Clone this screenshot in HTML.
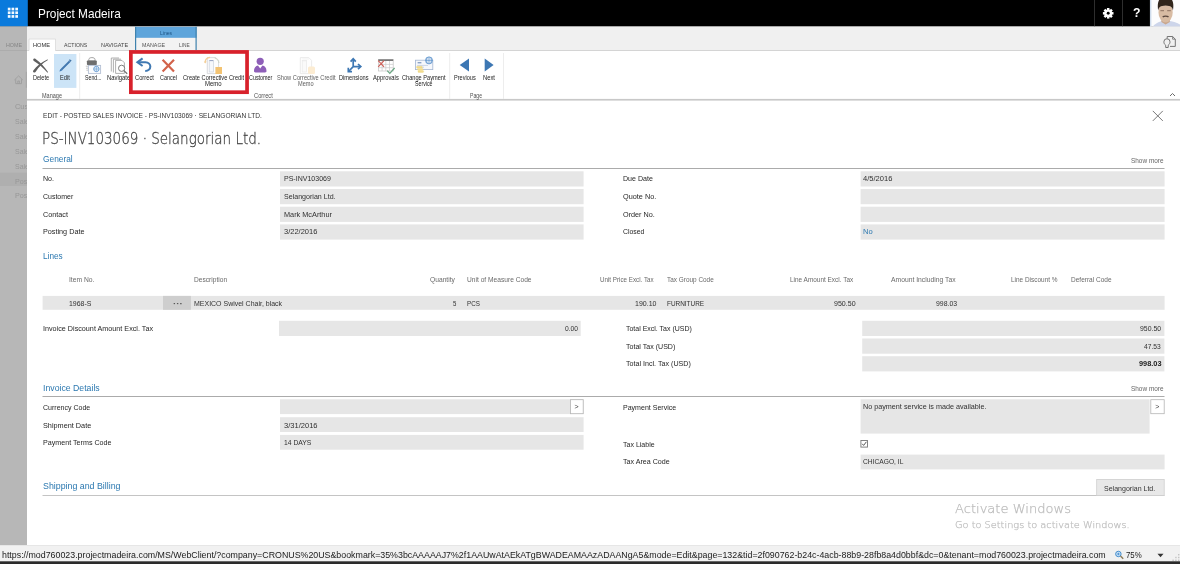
<!DOCTYPE html>
<html lang="en"><head><meta charset="utf-8"><title>Project Madeira - Posted Sales Invoice</title>
<style>
html,body{margin:0;padding:0;background:#fff;}
body{width:1180px;height:564px;overflow:hidden;font-family:"Liberation Sans",sans-serif;}
#app{will-change:transform;position:relative;width:1180px;height:564px;overflow:hidden;background:#fff;}
#app div,#app svg{position:absolute;}
.t{position:absolute;white-space:nowrap;transform-origin:0 50%;display:block;}
.f{background:#e6e6e6;}
.bm{display:inline-block;width:0;height:0;vertical-align:baseline;}

</style></head>
<body>
<div id="app">
<svg style="left:0;top:0" width="1180" height="564" viewBox="0 0 1180 564">
<!-- top bar -->
<rect x="0" y="0" width="1180" height="26.6" fill="#000"/>
<rect x="0" y="0" width="27.8" height="26.5" fill="#0a7adc"/>
<g fill="#f4faff"><rect x="7.80" y="7.70" width="2.7" height="2.7"/><rect x="11.55" y="7.70" width="2.7" height="2.7"/><rect x="15.30" y="7.70" width="2.7" height="2.7"/><rect x="7.80" y="11.40" width="2.7" height="2.7"/><rect x="11.55" y="11.40" width="2.7" height="2.7"/><rect x="15.30" y="11.40" width="2.7" height="2.7"/><rect x="7.80" y="15.10" width="2.7" height="2.7"/><rect x="11.55" y="15.10" width="2.7" height="2.7"/><rect x="15.30" y="15.10" width="2.7" height="2.7"/></g>
<rect x="1094" y="0" width="1" height="26.8" fill="#2e2e2e"/>
<rect x="1122" y="0" width="1" height="26.8" fill="#2e2e2e"/>
<!-- gear -->
<g transform="translate(1108.2,13.3)"><g fill="#fff"><circle r="3.9"/><rect x="-1.25" y="-5.3" width="2.5" height="10.6"/><rect x="-1.25" y="-5.3" width="2.5" height="10.6" transform="rotate(45)"/><rect x="-1.25" y="-5.3" width="2.5" height="10.6" transform="rotate(90)"/><rect x="-1.25" y="-5.3" width="2.5" height="10.6" transform="rotate(135)"/></g><circle r="1.45" fill="#000"/></g>
<!-- avatar -->
<defs><filter id="bl" x="-10%" y="-10%" width="120%" height="120%"><feGaussianBlur stdDeviation="0.55"/></filter><clipPath id="avc"><rect x="0" y="0" width="30.2" height="26.8"/></clipPath></defs>
<g transform="translate(1149.8,0)" clip-path="url(#avc)"><rect width="30.2" height="26.8" fill="#fcfcfd"/><rect width="1.6" height="26.8" fill="#cfdcec"/>
<g filter="url(#bl)">
<path d="M2 28 C5 23 10.5 21.4 13 20.8 L18.5 20.8 C22 21.4 27 22.4 31 25 V28 Z" fill="#cdd5ea"/>
<path d="M11.6 17 H20 V22 L15.8 24.6 L11.6 22 Z" fill="#c9a68c"/>
<ellipse cx="15.8" cy="12.4" rx="7.1" ry="10.2" fill="#d8bba3"/>
<path d="M8.5 10.6 C7.2 5 8.6 -1.2 11.2 -1.2 H20.4 C23 -1.2 24.4 5 23.1 10.6 C22.8 7.4 21.4 5.7 15.8 5.5 C10.2 5.7 8.8 7.4 8.5 10.6 Z" fill="#30261f"/>
<path d="M10.6 10.6 H14.2 M17.4 10.6 H21" stroke="#9c7f6d" stroke-width="1.4"/>
<path d="M12.9 16.9 C14.3 15.9 17.3 15.9 18.7 16.9" fill="none" stroke="#5a463d" stroke-width="1.4"/>
</g></g>

<!-- left sidebar (dimmed) -->
<rect x="0" y="26.4" width="27" height="519" fill="#b7b7b7"/>
<rect x="0" y="172.6" width="27" height="13.4" fill="#afafaf"/>
<rect x="0" y="50" width="27" height="1" fill="#acacac"/>
<g fill="none"><path d="M14.4 80 L18.6 75.9 L22.8 80 M15.7 79.2 V83.6 H21.5 V79.2 M17.8 83.6 V81 H19.4 V83.6" stroke="#9c9c9c" stroke-width="0.85"/><path d="M26.3 71.8 V87.8" stroke="#a4a4a4" stroke-width="0.9"/></g>

<!-- tab strip -->
<rect x="27" y="26.5" width="1153" height="24" fill="#f0f0f0"/>
<rect x="27.2" y="50" width="1153" height="1" fill="#d4d4d4"/>
<path d="M29 51 V39 H55.5 V51" fill="#fff" stroke="#dcdcdc" stroke-width="0.9"/>
<rect x="29.5" y="50" width="25.5" height="1.2" fill="#fff"/>
<!-- Lines contextual group -->
<rect x="135" y="26.8" width="61.6" height="11.1" fill="#5ea5db"/>
<rect x="135" y="37.9" width="61.6" height="12.3" fill="#f3f3f3"/>
<rect x="135" y="26.8" width="1.2" height="23.4" fill="#3f82ad"/>
<rect x="195.5" y="26.8" width="1.2" height="23.4" fill="#3f82ad"/>
<!-- lightbulb/page icon -->
<g fill="none" stroke="#6e6e6e" stroke-width="0.95"><path d="M1167.2 38.6 V36.5 H1172.6 L1175.3 39.2 V46.4 H1170"/><path d="M1172.6 36.5 V39.2 H1175.3" stroke-width="0.8"/><path d="M1165.7 47.5 V45.3 C1164.3 44.2 1163.9 43 1163.9 41.8 A3.05 3.05 0 0 1 1170 41.8 C1170 43 1169.6 44.2 1168.2 45.3 V47.5 Z" fill="#f0f0f0"/></g>

<!-- ribbon -->
<rect x="27.2" y="51" width="1153" height="48" fill="#fff"/>
<rect x="27" y="98.9" width="1153" height="1.7" fill="#c8c8c8"/>
<rect x="54" y="54" width="22.4" height="33.9" fill="#cce4f7"/>
<rect x="79.2" y="53" width="1" height="46" fill="#ededed"/>
<rect x="449.2" y="53" width="1" height="46" fill="#ededed"/>
<rect x="503" y="53" width="1" height="46" fill="#ededed"/>
<path d="M1170 96 L1172.5 93.5 L1175 96" fill="none" stroke="#6a6a6a" stroke-width="1"/>

<!-- page close X -->
<path d="M1152.8 110.9 L1162.8 120.9 M1162.8 110.9 L1152.8 120.9" stroke="#707070" stroke-width="0.95" fill="none"/>

<!-- section rules -->
<rect x="42.5" y="168" width="1122" height="1" fill="#ababab"/>
<rect x="42.5" y="396" width="1122" height="1" fill="#ababab"/>
<rect x="42.5" y="495" width="1122" height="1" fill="#c4c4c4"/>

<g fill="#e6e6e6">
<!-- General fields -->
<rect x="280" y="171.3" width="303.6" height="15.2"/>
<rect x="280" y="189" width="303.6" height="15.2"/>
<rect x="280" y="206.7" width="303.6" height="15.2"/>
<rect x="280" y="224.4" width="303.6" height="15.2"/>
<rect x="860.6" y="171.3" width="304" height="15.2"/>
<rect x="860.6" y="189" width="304" height="15.2"/>
<rect x="860.6" y="206.7" width="304" height="15.2"/>
<rect x="860.6" y="224.4" width="304" height="15.2"/>
<!-- Lines row -->
<rect x="42.6" y="295.9" width="1122" height="13.9"/>
<rect x="279" y="320.8" width="301.7" height="15.2"/>
<rect x="862.2" y="320.8" width="302.2" height="15.2"/>
<rect x="862.2" y="338.5" width="302.2" height="15.2"/>
<rect x="862.2" y="356.2" width="302.2" height="15.2"/>
<!-- Invoice details -->
<rect x="280" y="399.3" width="303.6" height="14.8"/>
<rect x="280" y="417.2" width="303.6" height="14.8"/>
<rect x="280" y="434.9" width="303.6" height="14.8"/>
<rect x="860.6" y="399.3" width="289" height="34.3"/>
<rect x="860.6" y="454.6" width="304" height="14.8"/>
</g>
<rect x="163" y="295.9" width="27.9" height="13.9" fill="#cecece"/>
<rect x="570.4" y="399.7" width="12.8" height="14" fill="#fff" stroke="#b5b5b5" stroke-width="0.8"/>
<rect x="1150.8" y="399.7" width="13.4" height="14" fill="#fff" stroke="#b5b5b5" stroke-width="0.8"/>
<g transform="translate(860.4,440)"><rect x="0.5" y="0.5" width="6.6" height="6.6" fill="#fff" stroke="#777" stroke-width="0.9"/><path d="M1.8 3.8 L3.2 5.4 L6 1.8" fill="none" stroke="#444" stroke-width="0.9"/></g>
<rect x="1096.7" y="479.4" width="67.5" height="16" fill="#e8e8e8" stroke="#cfcfcf" stroke-width="0.8"/>

<!-- status bar -->
<rect x="0" y="545" width="1180" height="19" fill="#f1f1f1"/>
<rect x="0" y="545" width="1180" height="1" fill="#e6e6e6"/>
<rect x="0" y="561.3" width="1180" height="2.7" fill="#2b2b2b"/>
<g transform="translate(1114.6,550.2) scale(0.88)"><circle cx="4.3" cy="4.3" r="3.1" fill="#cfe6fb" stroke="#2f7fc4" stroke-width="1"/><path d="M6.7 6.7 L9.8 9.8" stroke="#8a7b5a" stroke-width="1.6"/><path d="M2.8 4.3 H5.8 M4.3 2.8 V5.8" stroke="#2f7fc4" stroke-width="0.8"/></g>
<path d="M1157.5 553.8 H1163.5 L1160.5 557.2 Z" fill="#333"/>
<g fill="#c4c4c4" transform="translate(1171,552.6)"><rect x="7" y="7" width="1.4" height="1.4"/><rect x="7" y="4.2" width="1.4" height="1.4"/><rect x="4.2" y="7" width="1.4" height="1.4"/><rect x="7" y="1.4" width="1.4" height="1.4"/><rect x="4.2" y="4.2" width="1.4" height="1.4"/><rect x="1.4" y="7" width="1.4" height="1.4"/></g>
</svg>
<svg style="left:27px;top:51px" width="500" height="48" viewBox="27 51 500 48">
<!-- Delete X (brush style) -->
<g fill="#5e5e5e">
<path d="M33.2 59.6 C33.4 58.4 34.6 58.2 35.6 58.9 C40.4 62.2 44.4 66.6 48 72 C48.2 72.5 47.7 72.8 47.3 72.4 C43.4 68 39 64.2 33.9 61 C33.3 60.6 33.1 60.1 33.2 59.6 Z"/>
<path d="M47.9 59.9 C48.1 59.5 47.7 59.3 47.3 59.5 C41.6 62 36.6 66 33.3 70.4 C32.7 71.3 33.1 72.3 34.1 72.4 C34.9 72.5 35.5 72.2 35.9 71.5 C38.6 67 42.6 63 47.6 60.3 Z"/>
</g>
<!-- Edit pencil -->
<g>
<path d="M60.7 69.2 L69 60.9 L70.1 62 L61.8 70.3 Z" fill="#4479b0" stroke="#4479b0" stroke-width="0.7" stroke-linejoin="round"/>
<path d="M59.4 71.6 L60.3 69 L62 70.7 Z" fill="#3f7cb8"/>
<path d="M69.4 60.2 L70 59.6 L71.2 60.8 L70.7 61.4 Z" fill="#35689c" stroke="#35689c" stroke-width="0.6"/>
</g>
<!-- Send: printer + envelope + globe -->
<g>
<path d="M88.8 61 V59.4 C88.8 57 95 57 95 59.4 V61 Z" fill="#fff" stroke="#8d8d8d" stroke-width="0.8"/>
<rect x="86.9" y="60.4" width="9.9" height="4.6" rx="0.8" fill="#6e6e6e"/>
<path d="M85.8 66.2 H88 M86 68.2 H88 M86.4 70.2 H88" stroke="#b5b5b5" stroke-width="0.8"/>
<rect x="88.4" y="65.4" width="12.2" height="8" fill="#fbfcfe" stroke="#b4c0d4" stroke-width="0.9"/>
<circle cx="96.4" cy="69" r="2.7" fill="#e3eefa" stroke="#6a9dd2" stroke-width="0.9"/>
<path d="M96.4 66.3 V71.7 M93.7 69 H99.1" stroke="#6a9dd2" stroke-width="0.6"/>
</g>
<!-- Navigate: pages + magnifier -->
<g fill="#fff" stroke="#9c9c9c" stroke-width="0.8">
<path d="M111.3 71.5 V58 H119"/>
<path d="M113.4 72.5 V59.2 H121"/>
<path d="M115.6 73.4 V60.4 H122 L124.4 62.8 V73.4 Z"/>
<circle cx="121.6" cy="68.3" r="3.1" stroke="#6f6f6f" stroke-width="0.9"/>
<path d="M123.9 70.6 L127.2 73.8" stroke="#6f6f6f" stroke-width="1.2" fill="none"/>
</g>
<!-- Correct (undo arrow) -->
<g fill="none" stroke="#4079b2" stroke-width="2.05" stroke-linejoin="miter">
<path d="M142.6 58.4 L137.4 62.3 L142.6 66"/>
<path d="M138 62.3 H145.4 C152 62.3 152 70.8 145.2 71"/>
</g>
<!-- Cancel X -->
<g fill="none" stroke="#d2634b" stroke-width="2.2">
<path d="M162.6 59.8 L174 71.4 M174 59.8 L162.6 71.4"/>
</g>
<!-- Create Corrective Credit Memo -->
<g>
<path d="M207.3 57.6 H215.8 L218.6 60.4 V73.6 H207.3 Z" fill="#fdfdfd" stroke="#cfd2d6" stroke-width="0.8"/>
<rect x="209.2" y="60.4" width="4.4" height="11.6" fill="#f6f8fb" stroke="#cdd3de" stroke-width="0.7"/>
<path d="M209.6 60.6 H213.2" stroke="#8f9dbd" stroke-width="0.9"/>
<path d="M205.2 62.4 C205.2 59.2 207.5 57.6 210 57.4" fill="none" stroke="#f3cf98" stroke-width="1.3"/>
<path d="M203.8 61.4 L205.2 63.6 L206.8 61.4 Z" fill="#f3cf98"/>
<path d="M214.6 57.9 C217 58.8 218.8 60.6 219 63" fill="none" stroke="#c9d3c0" stroke-width="0.9"/>
<rect x="215.4" y="67" width="6.6" height="7" fill="#f3c372"/>
</g>
<!-- Customer -->
<g fill="#8e5fb8">
<circle cx="260.2" cy="61.3" r="3.6"/>
<path d="M254 71 C254 68 255.6 66 258 65.6 L260.2 68.6 L262.4 65.6 C264.8 66 266.5 68 266.5 71 C266.5 72 266 72.4 265 72.4 H255.5 C254.5 72.4 254 72 254 71 Z"/>
</g>
<!-- Show Corrective Credit Memo (disabled) -->
<g>
<path d="M300.3 57.6 H308.8 L311.6 60.4 V73.6 H300.3 Z" fill="#fefefe" stroke="#e6e6e6" stroke-width="0.8"/>
<rect x="302.2" y="60.4" width="4.4" height="11.6" fill="#fafafa" stroke="#e9e9e9" stroke-width="0.7"/>
<path d="M302.4 59 H309 M302.4 61 H307" stroke="#ececec" stroke-width="0.6"/>
<rect x="308" y="66.6" width="7" height="7.4" rx="1.5" fill="#fcecd2"/>
</g>
<!-- Dimensions -->
<g fill="none" stroke="#3d77b3" stroke-width="1.7">
<path d="M353.2 66.6 V59.6 M353.2 66.6 H360 M353.2 66.6 L349 71"/>
<path d="M350.6 61.6 L353.2 58.8 L355.8 61.6" />
<path d="M358 64 L360.8 66.6 L358 69.2"/>
<path d="M348.3 67.8 V71.6 H352"/>
</g>
<!-- Approvals -->
<g>
<rect x="378.4" y="59.6" width="14.8" height="11.4" fill="#fff" stroke="#c4c4c4" stroke-width="0.7"/>
<rect x="378.4" y="59.4" width="14.8" height="1.5" fill="#6a6a6a"/>
<path d="M378.4 64.4 H393.2 M378.4 67.7 H393.2 M382.1 61 V71 M385.8 61 V71 M389.5 61 V71" stroke="#c9c9c9" stroke-width="0.7" fill="none"/>
<path d="M378.2 60.6 L384 66.8 M384 60.6 L378.2 66.8" stroke="#cf6058" stroke-width="1.2" fill="none"/>
<path d="M387.2 70.6 L389.8 73.4 L394.6 68" stroke="#6aa582" stroke-width="1.3" fill="none"/>
</g>
<!-- Change Payment Service -->
<g>
<rect x="415.4" y="60.2" width="17.4" height="9.4" fill="#f6f8fc" stroke="#a3b6d3" stroke-width="0.8"/>
<path d="M417.6 62.8 H421.4" stroke="#5f7fb0" stroke-width="1"/>
<path d="M417.2 65.4 H428 M417.2 67.2 H424" stroke="#b9c6db" stroke-width="0.7"/>
<circle cx="429" cy="60.4" r="3.5" fill="#e9f1fb" stroke="#5b92cc" stroke-width="0.8"/>
<path d="M429 56.9 V63.9 M425.5 60.4 H432.5 M427.3 57.4 C426.4 59.4 426.4 61.4 427.3 63.4 M430.7 57.4 C431.6 59.4 431.6 61.4 430.7 63.4" stroke="#4a86c5" stroke-width="0.6" fill="none"/>
<rect x="416.6" y="66.2" width="5.6" height="1.8" rx="0.6" fill="#f5df8f" stroke="#e6cb6e" stroke-width="0.3"/>
<rect x="417.4" y="68.4" width="5.6" height="1.8" rx="0.6" fill="#f5df8f" stroke="#e6cb6e" stroke-width="0.3"/>
<rect x="418" y="70.6" width="5.6" height="1.8" rx="0.6" fill="#f5df8f" stroke="#e6cb6e" stroke-width="0.3"/>
</g>
<!-- Previous / Next -->
<path d="M459.7 65 L469 58.5 V71.4 Z" fill="#3d77b3"/>
<path d="M493.6 65 L484.7 58.5 V71.4 Z" fill="#3d77b3"/>
</svg>


<span class="t" style="left:37.96px;top:6.0px;font-size:12.6px;line-height:17.64px;color:#fff;transform:scaleX(0.9382);">Project Madeira</span>
<span class="t" style="left:1132.6px;top:5.47px;font-size:12.6px;line-height:17.64px;color:#fff;font-weight:700;transform:scaleX(0.9714);">?</span>
<span class="t" style="left:5.8px;top:41.02px;font-size:5.8px;line-height:8.12px;color:#868686;transform:scaleX(0.9244);">HOME</span>
<span class="t" style="left:32.9px;top:41.02px;font-size:5.8px;line-height:8.12px;color:#2e2e2e;transform:scaleX(0.9758);">HOME</span>
<span class="t" style="left:63.7px;top:41.01px;font-size:5.8px;line-height:8.12px;color:#444;transform:scaleX(0.8996);">ACTIONS</span>
<span class="t" style="left:100.7px;top:41.01px;font-size:5.8px;line-height:8.12px;color:#444;transform:scaleX(0.9550);">NAVIGATE</span>
<span class="t" style="left:159.8px;top:29.01px;font-size:6px;line-height:8.4px;color:#1d5484;transform:scaleX(0.8436);">Lines</span>
<span class="t" style="left:141.7px;top:41.01px;font-size:5.8px;line-height:8.12px;color:#555;transform:scaleX(0.9186);">MANAGE</span>
<span class="t" style="left:179.1px;top:41.01px;font-size:5.8px;line-height:8.12px;color:#555;transform:scaleX(0.8294);">LINE</span>
<span class="t" style="left:32.5px;top:74.01px;font-size:6.4px;line-height:8.96px;color:#1c1c1c;transform:scaleX(0.8721);">Delete</span>
<span class="t" style="left:59.9px;top:74.01px;font-size:6.4px;line-height:8.96px;color:#1c1c1c;transform:scaleX(0.8811);">Edit</span>
<span class="t" style="left:85.0px;top:74.01px;font-size:6.4px;line-height:8.96px;color:#1c1c1c;transform:scaleX(0.8156);">Send...</span>
<span class="t" style="left:107.4px;top:74.01px;font-size:6.4px;line-height:8.96px;color:#1c1c1c;transform:scaleX(0.9194);">Navigate</span>
<span class="t" style="left:134.9px;top:74.01px;font-size:6.4px;line-height:8.96px;color:#1c1c1c;transform:scaleX(0.9020);">Correct</span>
<span class="t" style="left:160.0px;top:74.01px;font-size:6.4px;line-height:8.96px;color:#1c1c1c;transform:scaleX(0.8576);">Cancel</span>
<span class="t" style="left:182.8px;top:74.01px;font-size:6.4px;line-height:8.96px;color:#1c1c1c;transform:scaleX(0.8854);">Create Corrective Credit</span>
<span class="t" style="left:204.8px;top:80.0px;font-size:6.4px;line-height:8.96px;color:#1c1c1c;transform:scaleX(0.9340);">Memo</span>
<span class="t" style="left:248.5px;top:74.01px;font-size:6.4px;line-height:8.96px;color:#1c1c1c;transform:scaleX(0.8435);">Customer</span>
<span class="t" style="left:276.8px;top:74.01px;font-size:6.4px;line-height:8.96px;color:#5e5e5e;transform:scaleX(0.8904);">Show Corrective Credit</span>
<span class="t" style="left:298.0px;top:80.0px;font-size:6.4px;line-height:8.96px;color:#5e5e5e;transform:scaleX(0.8791);">Memo</span>
<span class="t" style="left:339.4px;top:74.01px;font-size:6.4px;line-height:8.96px;color:#1c1c1c;transform:scaleX(0.8828);">Dimensions</span>
<span class="t" style="left:373.0px;top:74.01px;font-size:6.4px;line-height:8.96px;color:#1c1c1c;transform:scaleX(0.9071);">Approvals</span>
<span class="t" style="left:402.3px;top:74.01px;font-size:6.4px;line-height:8.96px;color:#1c1c1c;transform:scaleX(0.8810);">Change Payment</span>
<span class="t" style="left:415.3px;top:80.0px;font-size:6.4px;line-height:8.96px;color:#1c1c1c;transform:scaleX(0.8228);">Service</span>
<span class="t" style="left:453.8px;top:74.01px;font-size:6.4px;line-height:8.96px;color:#1c1c1c;transform:scaleX(0.8716);">Previous</span>
<span class="t" style="left:483.0px;top:74.01px;font-size:6.4px;line-height:8.96px;color:#1c1c1c;transform:scaleX(0.9129);">Next</span>
<span class="t" style="left:41.9px;top:92.01px;font-size:6.3px;line-height:8.82px;color:#505050;transform:scaleX(0.8773);">Manage</span>
<span class="t" style="left:254.0px;top:92.01px;font-size:6.3px;line-height:8.82px;color:#505050;transform:scaleX(0.9094);">Correct</span>
<span class="t" style="left:469.6px;top:92.01px;font-size:6.3px;line-height:8.82px;color:#505050;transform:scaleX(0.8156);">Page</span>
<div style="left:0;top:101.12px;width:27px;height:11.2px;overflow:hidden"><span class="t" style="left:14.6px;top:0px;font-size:8px;line-height:11.2px;color:#979797;transform:scaleX(0.9288);">Cust</span></div>
<div style="left:0;top:115.93px;width:27px;height:11.2px;overflow:hidden"><span class="t" style="left:14.6px;top:0px;font-size:8px;line-height:11.2px;color:#979797;transform:scaleX(0.8755);">Sale</span></div>
<div style="left:0;top:130.82px;width:27px;height:11.2px;overflow:hidden"><span class="t" style="left:14.6px;top:0px;font-size:8px;line-height:11.2px;color:#979797;transform:scaleX(0.8755);">Sale</span></div>
<div style="left:0;top:146.02px;width:27px;height:11.2px;overflow:hidden"><span class="t" style="left:14.6px;top:0px;font-size:8px;line-height:11.2px;color:#979797;transform:scaleX(0.8755);">Sale</span></div>
<div style="left:0;top:160.71px;width:27px;height:11.2px;overflow:hidden"><span class="t" style="left:14.6px;top:0px;font-size:8px;line-height:11.2px;color:#979797;transform:scaleX(0.8755);">Sale</span></div>
<div style="left:0;top:175.52px;width:27px;height:11.2px;overflow:hidden"><span class="t" style="left:14.6px;top:0px;font-size:8px;line-height:11.2px;color:#979797;transform:scaleX(0.8936);">Post</span></div>
<div style="left:0;top:190.21px;width:27px;height:11.2px;overflow:hidden"><span class="t" style="left:14.6px;top:0px;font-size:8px;line-height:11.2px;color:#979797;transform:scaleX(0.8936);">Post</span></div>
<span class="t" style="left:42.5px;top:111.01px;font-size:6.9px;line-height:9.66px;color:#333;transform:scaleX(0.9570);">EDIT - POSTED SALES INVOICE - PS-INV103069 · SELANGORIAN LTD.</span>
<span class="t" style="left:41.65px;top:128.12px;font-size:15.8px;line-height:22.12px;color:#464646;font-family:'DejaVu Sans Light', 'DejaVu Sans', 'Liberation Sans', sans-serif;font-weight:200;-webkit-text-stroke:0.3px #464646;transform:scaleX(0.8541);">PS-INV103069 · Selangorian Ltd.</span>
<span class="t" style="left:42.6px;top:153.23px;font-size:8.6px;line-height:12.04px;color:#2b78b0;transform:scaleX(0.9718);">General</span>
<span class="t" style="left:1131.0px;top:156.65px;font-size:6.4px;line-height:8.96px;color:#666;transform:scaleX(1.0071);">Show more</span>
<span class="t" style="left:42.6px;top:174.01px;font-size:7.3px;line-height:10.22px;color:#262626;transform:scaleX(0.9711);">No.</span>
<span class="t" style="left:42.6px;top:192.01px;font-size:7.3px;line-height:10.22px;color:#262626;transform:scaleX(0.9566);">Customer</span>
<span class="t" style="left:42.6px;top:210.01px;font-size:7.3px;line-height:10.22px;color:#262626;transform:scaleX(0.9912);">Contact</span>
<span class="t" style="left:42.6px;top:227.01px;font-size:7.3px;line-height:10.22px;color:#262626;transform:scaleX(0.9923);">Posting Date</span>
<span class="t" style="left:283.5px;top:174.01px;font-size:7.3px;line-height:10.22px;color:#303030;transform:scaleX(0.9626);">PS-INV103069</span>
<span class="t" style="left:283.5px;top:192.01px;font-size:7.3px;line-height:10.22px;color:#303030;transform:scaleX(0.9696);">Selangorian Ltd.</span>
<span class="t" style="left:283.5px;top:210.01px;font-size:7.3px;line-height:10.22px;color:#303030;transform:scaleX(1.0019);">Mark McArthur</span>
<span class="t" style="left:283.5px;top:227.01px;font-size:7.3px;line-height:10.22px;color:#303030;transform:scaleX(1.0277);">3/22/2016</span>
<span class="t" style="left:623.2px;top:174.01px;font-size:7.3px;line-height:10.22px;color:#262626;transform:scaleX(0.9685);">Due Date</span>
<span class="t" style="left:623.2px;top:192.01px;font-size:7.3px;line-height:10.22px;color:#262626;transform:scaleX(0.9990);">Quote No.</span>
<span class="t" style="left:623.2px;top:210.01px;font-size:7.3px;line-height:10.22px;color:#262626;transform:scaleX(0.9935);">Order No.</span>
<span class="t" style="left:623.2px;top:227.01px;font-size:7.3px;line-height:10.22px;color:#262626;transform:scaleX(0.9446);">Closed</span>
<span class="t" style="left:863.4px;top:174.01px;font-size:7.3px;line-height:10.22px;color:#303030;transform:scaleX(1.0372);">4/5/2016</span>
<span class="t" style="left:863.4px;top:227.01px;font-size:7.3px;line-height:10.22px;color:#2b78b0;transform:scaleX(1.0356);">No</span>
<span class="t" style="left:42.6px;top:249.84px;font-size:8.6px;line-height:12.04px;color:#2b78b0;transform:scaleX(0.9581);">Lines</span>
<span class="t" style="left:68.8px;top:274.67px;font-size:7.3px;line-height:10.22px;color:#6a6a6a;transform:scaleX(0.9221);">Item No.</span>
<span class="t" style="left:194.2px;top:274.67px;font-size:7.3px;line-height:10.22px;color:#6a6a6a;transform:scaleX(0.9056);">Description</span>
<span class="t" style="left:429.8px;top:274.67px;font-size:7.3px;line-height:10.22px;color:#6a6a6a;transform:scaleX(0.9155);">Quantity</span>
<span class="t" style="left:467.0px;top:274.67px;font-size:7.3px;line-height:10.22px;color:#6a6a6a;transform:scaleX(0.9095);">Unit of Measure Code</span>
<span class="t" style="left:600.0px;top:274.67px;font-size:7.3px;line-height:10.22px;color:#6a6a6a;transform:scaleX(0.8544);">Unit Price Excl. Tax</span>
<span class="t" style="left:666.8px;top:274.67px;font-size:7.3px;line-height:10.22px;color:#6a6a6a;transform:scaleX(0.8799);">Tax Group Code</span>
<span class="t" style="left:789.5px;top:274.67px;font-size:7.3px;line-height:10.22px;color:#6a6a6a;transform:scaleX(0.8822);">Line Amount Excl. Tax</span>
<span class="t" style="left:891.0px;top:274.67px;font-size:7.3px;line-height:10.22px;color:#6a6a6a;transform:scaleX(0.9270);">Amount Including Tax</span>
<span class="t" style="left:1011.0px;top:274.67px;font-size:7.3px;line-height:10.22px;color:#6a6a6a;transform:scaleX(0.8828);">Line Discount %</span>
<span class="t" style="left:1070.5px;top:274.67px;font-size:7.3px;line-height:10.22px;color:#6a6a6a;transform:scaleX(0.8927);">Deferral Code</span>
<span class="t" style="left:69.0px;top:298.88px;font-size:7.3px;line-height:10.22px;color:#303030;transform:scaleX(0.9509);">1968-S</span>
<span class="t" style="left:172.5px;top:298.12px;font-size:8px;line-height:11.2px;color:#555;font-weight:700;transform:scaleX(1.2281);">···</span>
<span class="t" style="left:194.2px;top:298.88px;font-size:7.3px;line-height:10.22px;color:#333;transform:scaleX(0.9567);">MEXICO Swivel Chair, black</span>
<span class="t" style="left:452.7px;top:298.88px;font-size:7.3px;line-height:10.22px;color:#303030;transform:scaleX(0.8250);">5</span>
<span class="t" style="left:467.0px;top:298.88px;font-size:7.3px;line-height:10.22px;color:#303030;transform:scaleX(0.8588);">PCS</span>
<span class="t" style="left:634.6px;top:298.88px;font-size:7.3px;line-height:10.22px;color:#303030;transform:scaleX(0.9614);">190.10</span>
<span class="t" style="left:666.8px;top:298.88px;font-size:7.3px;line-height:10.22px;color:#303030;transform:scaleX(0.8796);">FURNITURE</span>
<span class="t" style="left:833.5px;top:298.88px;font-size:7.3px;line-height:10.22px;color:#303030;transform:scaleX(0.9659);">950.50</span>
<span class="t" style="left:936.0px;top:298.88px;font-size:7.3px;line-height:10.22px;color:#303030;transform:scaleX(0.9434);">998.03</span>
<span class="t" style="left:42.6px;top:323.77px;font-size:7.3px;line-height:10.22px;color:#262626;transform:scaleX(0.9877);">Invoice Discount Amount Excl. Tax</span>
<span class="t" style="left:565.0px;top:323.77px;font-size:7.3px;line-height:10.22px;color:#303030;transform:scaleX(0.9191);">0.00</span>
<span class="t" style="left:626.0px;top:323.77px;font-size:7.3px;line-height:10.22px;color:#262626;transform:scaleX(0.9562);">Total Excl. Tax (USD)</span>
<span class="t" style="left:626.0px;top:341.67px;font-size:7.3px;line-height:10.22px;color:#262626;transform:scaleX(0.9673);">Total Tax (USD)</span>
<span class="t" style="left:626.0px;top:359.38px;font-size:7.3px;line-height:10.22px;color:#262626;transform:scaleX(0.9763);">Total Incl. Tax (USD)</span>
<span class="t" style="left:1140.0px;top:323.77px;font-size:7.3px;line-height:10.22px;color:#303030;transform:scaleX(0.9434);">950.50</span>
<span class="t" style="left:1144.4px;top:341.67px;font-size:7.3px;line-height:10.22px;color:#303030;transform:scaleX(0.9120);">47.53</span>
<span class="t" style="left:1138.6px;top:359.38px;font-size:7.3px;line-height:10.22px;color:#222;font-weight:700;transform:scaleX(1.0063);">998.03</span>
<span class="t" style="left:42.6px;top:381.64px;font-size:8.6px;line-height:12.04px;color:#2b78b0;transform:scaleX(1.0146);">Invoice Details</span>
<span class="t" style="left:1131.0px;top:385.15px;font-size:6.4px;line-height:8.96px;color:#666;transform:scaleX(1.0071);">Show more</span>
<span class="t" style="left:42.6px;top:403.17px;font-size:7.3px;line-height:10.22px;color:#262626;transform:scaleX(0.9630);">Currency Code</span>
<span class="t" style="left:42.6px;top:420.77px;font-size:7.3px;line-height:10.22px;color:#262626;transform:scaleX(0.9998);">Shipment Date</span>
<span class="t" style="left:42.6px;top:438.38px;font-size:7.3px;line-height:10.22px;color:#262626;transform:scaleX(0.9786);">Payment Terms Code</span>
<span class="t" style="left:283.5px;top:420.77px;font-size:7.3px;line-height:10.22px;color:#303030;transform:scaleX(1.0338);">3/31/2016</span>
<span class="t" style="left:283.5px;top:438.38px;font-size:7.3px;line-height:10.22px;color:#303030;transform:scaleX(0.9289);">14 DAYS</span>
<span class="t" style="left:574.6px;top:402.07px;font-size:7px;line-height:9.8px;color:#444;transform:scaleX(1.0000);">&gt;</span>
<span class="t" style="left:623.2px;top:403.17px;font-size:7.3px;line-height:10.22px;color:#262626;transform:scaleX(0.9638);">Payment Service</span>
<span class="t" style="left:623.2px;top:439.77px;font-size:7.3px;line-height:10.22px;color:#262626;transform:scaleX(0.9634);">Tax Liable</span>
<span class="t" style="left:623.2px;top:457.38px;font-size:7.3px;line-height:10.22px;color:#262626;transform:scaleX(0.9770);">Tax Area Code</span>
<span class="t" style="left:863.4px;top:402.38px;font-size:7.3px;line-height:10.22px;color:#303030;transform:scaleX(0.9881);">No payment service is made available.</span>
<span class="t" style="left:1155.3px;top:402.07px;font-size:7px;line-height:9.8px;color:#444;transform:scaleX(1.0000);">&gt;</span>
<span class="t" style="left:863.4px;top:457.38px;font-size:7.3px;line-height:10.22px;color:#303030;transform:scaleX(0.9131);">CHICAGO, IL</span>
<span class="t" style="left:42.6px;top:479.64px;font-size:8.6px;line-height:12.04px;color:#2b78b0;transform:scaleX(1.0263);">Shipping and Billing</span>
<span class="t" style="left:1104.4px;top:483.77px;font-size:7.3px;line-height:10.22px;color:#333;transform:scaleX(0.9639);">Selangorian Ltd.</span>
<span class="t" style="left:955.3px;top:500.09px;font-size:13px;line-height:18.2px;color:#bcbcbc;font-family:'DejaVu Sans Light', 'DejaVu Sans', 'Liberation Sans', sans-serif;font-weight:200;-webkit-text-stroke:0.25px #bcbcbc;transform:scaleX(1.0047);">Activate Windows</span>
<span class="t" style="left:955.3px;top:519.12px;font-size:9.2px;line-height:12.88px;color:#c2c2c2;font-family:'DejaVu Sans Light', 'DejaVu Sans', 'Liberation Sans', sans-serif;font-weight:200;-webkit-text-stroke:0.25px #c2c2c2;transform:scaleX(1.0635);">Go to Settings to activate Windows.</span>
<span class="t" style="left:1.5px;top:549.18px;font-size:9px;line-height:12.6px;color:#1a1a1a;transform:scaleX(0.9813);">https://mod760023.projectmadeira.com/MS/WebClient/?company=CRONUS%20US&amp;bookmark=35%3bcAAAAAJ7%2f1AAUwAtAEkATgBWADEAMAAzADAANgA5&amp;mode=Edit&amp;page=132&amp;tid=2f090762-b24c-4acb-88b9-28fb8a4d0bbf&amp;dc=0&amp;tenant=mod760023.projectmadeira.com</span>
<span class="t" style="left:1125.8px;top:549.18px;font-size:9px;line-height:12.6px;color:#1a1a1a;transform:scaleX(0.8717);">75%</span>
<svg style="left:120px;top:44px" width="140" height="56" viewBox="120 44 140 56"><rect x="130.85" y="51.95" width="116.2" height="40.25" fill="none" stroke="#d8212b" stroke-width="3.7"/></svg>

</div>
</body></html>
